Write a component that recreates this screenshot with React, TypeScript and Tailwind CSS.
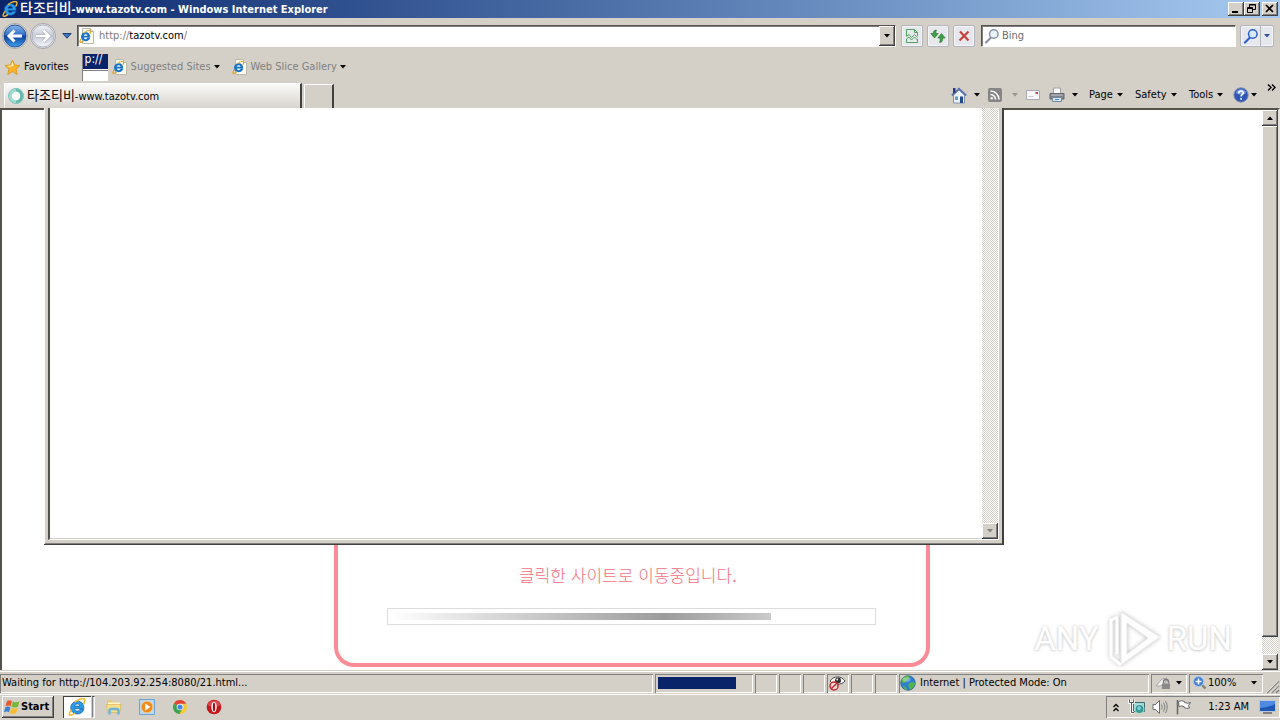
import React from "react";

const raised =
  "bg-[#d4d0c8] shadow-[inset_-1px_-1px_0_#404040,inset_1px_1px_0_#fff,inset_-2px_-2px_0_#808080]";
const sunken = "shadow-[inset_1px_1px_0_#808080,inset_-1px_-1px_0_#fff]";
const hatch =
  "bg-[repeating-conic-gradient(#fff_0_25%,#d4d0c8_0_50%)] bg-[length:2px_2px]";

function Arrow({ className = "fill-black" }: { className?: string }) {
  return (
    <svg width="6" height="4" viewBox="0 0 6 4" className={`shrink-0 ${className}`} aria-hidden="true">
      <path d="M0 0h6L3 3.5z" />
    </svg>
  );
}

function IeGlyph({ size = 16 }: { size?: number }) {
  return (
    <svg width={size} height={size} viewBox="0 0 16 16" className="shrink-0" aria-hidden="true">
      <path
        d="M14 10.200C13.200 12.800 11.200 14.200 8.400 14.200 5 14.200 2.400 11.900 2.400 8.700 2.400 5.400 5 2.800 8.400 2.800c3.700 0 6 2.700 5.700 6.700H6c.2 1.400 1.100 2.100 2.400 2.100.9 0 1.700-.4 2.100-1.400zM6 7.200h4.500C10.300 5.900 9.500 5.300 8.300 5.300 7.100 5.300 6.200 6 6 7.200z"
        fill="#2b9be6"
        stroke="#0c56a8"
        strokeWidth=".6"
      />
      <path
        d="M3 10.300C1.100 13 .6 15 1.800 15.300c1 .2 2.600-.6 4.200-1.900M5.800 3.700C9.200 1.200 13.400-.3 14.600 1c.8.9.3 2.600-1 4.600"
        fill="none"
        stroke="#f4b92e"
        strokeWidth="1.400"
      />
    </svg>
  );
}

function IePage() {
  return (
    <svg width="16" height="16" viewBox="0 0 16 16" className="shrink-0" aria-hidden="true">
      <path d="M3.500.5h8l3 3v12h-11z" fill="#fdfdf6" stroke="#bab8a6" />
      <path d="M11.500.5v3h3" fill="#e8e4d0" stroke="#bab8a6" />
      <path
        d="M11.200 9.800C10.600 11.900 8.900 13.200 6.700 13.200 4 13.200 2 11.300 2 8.800s2-4.500 4.700-4.500c2.800 0 4.700 2 4.500 5.200H4.800c.1 1 .9 1.700 1.900 1.700.8 0 1.400-.5 1.700-1.400zM4.800 7.800h3.700C8.300 6.800 7.600 6.300 6.700 6.300c-.9 0-1.700.5-1.900 1.500z"
        fill="#1b74cc"
      />
      <path d="M2.200 10.600C.9 12.600.5 14.200 1.400 14.400c.8.100 2-.5 3.300-1.500M5 4.800c2.500-1.900 5.500-3 6.400-2 .5.6.2 1.800-.6 3" fill="none" stroke="#dba52d" strokeWidth="1.200" />
    </svg>
  );
}

function NavCluster() {
  return (
    <div className="flex shrink-0 items-center rounded-full">
      <button aria-label="Back" className="size-7">
        <svg width="28" height="28" viewBox="0 0 28 28">
          <defs>
            <linearGradient id="bk" x1="0" y1="0" x2="0" y2="1">
              <stop offset="0" stopColor="#8db8ea" />
              <stop offset=".45" stopColor="#2f6fc6" />
              <stop offset=".5" stopColor="#0c3d98" />
              <stop offset="1" stopColor="#3fa4ee" />
            </linearGradient>
          </defs>
          <circle cx="14" cy="14" r="12.500" fill="#e7e9ee" stroke="#a3a2a8" />
          <circle cx="14" cy="14" r="11" fill="url(#bk)" stroke="#26508f" />
          <path d="M13.500 8.500 8 14l5.500 5.500M8.500 14H21" stroke="#fff" strokeWidth="3" fill="none" />
        </svg>
      </button>
      <button aria-label="Forward" className="size-7">
        <svg width="28" height="28" viewBox="0 0 28 28">
          <defs>
            <linearGradient id="fw" x1="0" y1="0" x2="0" y2="1">
              <stop offset="0" stopColor="#f2f3f6" />
              <stop offset=".5" stopColor="#c6cbd6" />
              <stop offset="1" stopColor="#f4f6fa" />
            </linearGradient>
          </defs>
          <circle cx="14" cy="14" r="12.500" fill="#e7e9ee" stroke="#a3a2a8" />
          <circle cx="14" cy="14" r="11" fill="url(#fw)" stroke="#b0b5c2" />
          <path d="m14.500 8.500 5.500 5.500-5.500 5.500M19.500 14H7" stroke="#a3a9b8" strokeWidth="4" fill="none" />
          <path d="m14.500 8.500 5.500 5.500-5.500 5.500M19.500 14H7" stroke="#fff" strokeWidth="2.600" fill="none" />
        </svg>
      </button>
    </div>
  );
}

function Magnifier({ stroke, lens }: { stroke: string; lens: string }) {
  return (
    <svg width="16" height="16" viewBox="0 0 16 16" className="shrink-0" aria-hidden="true">
      <path d="M7 9.500 2 14.500" stroke={stroke} strokeWidth="2.200" strokeLinecap="round" />
      <circle cx="9.800" cy="6" r="4.300" fill={lens} stroke={stroke} strokeWidth="1.500" />
    </svg>
  );
}

const toolBtn =
  "flex h-[22px] items-center justify-center rounded-xs border border-[#b3b5bb] bg-[#e6e8ee] shadow-[inset_0_0_0_1px_#f4f5f8]";

function TitleBar() {
  const ctl = `flex h-[14px] w-4 items-center justify-center ${raised}`;
  return (
    <header className="flex h-[18px] items-center bg-linear-to-r from-[#0a246a] to-[#a6caf0] pr-0.5 pl-0.5 text-white">
      <IeGlyph />
      <h1 className="ml-0.5 flex-1 text-[11px] font-bold whitespace-nowrap">
        <span className="text-[14px] font-medium">타조티비</span>-www.tazotv.com - Windows Internet Explorer
      </h1>
      <button aria-label="Minimize" className={ctl}>
        <svg width="16" height="14"><path d="M4 9h6v2H4z" /></svg>
      </button>
      <button aria-label="Restore" className={ctl}>
        <svg width="16" height="14" fill="none" stroke="#000">
          <path d="M5.500 5V2.500h6v5H9M5 3h7M3.500 5.500h5v5h-5zM3 6.500h6" />
        </svg>
      </button>
      <button aria-label="Close" className={`ml-0.5 ${ctl}`}>
        <svg width="16" height="14"><path d="m4 3 7 7M11 3l-7 7" stroke="#000" strokeWidth="1.700" /></svg>
      </button>
    </header>
  );
}

function NavBar() {
  return (
    <div className="flex h-[34px] items-center pt-px pr-1.5 pl-px">
      <NavCluster />
      <button aria-label="Recent pages" className="flex w-5 justify-center">
        <svg width="10" height="6"><path d="M.8.5h8.400L5 5.200z" fill="#3f78bd" stroke="#1c3f78" /></svg>
      </button>
      <div className="flex h-[22px] flex-1 items-center border border-t-[#55524c] border-r-white border-b-white border-l-[#55524c] bg-white pl-px shadow-[inset_1px_1px_0_#808080]">
        <IePage />
        <div className="relative ml-1 flex-1 text-[11px]">
          <input
            aria-label="Address"
            defaultValue="http://tazotv.com/"
            className="w-full bg-transparent text-transparent outline-none"
          />
          <span aria-hidden="true" className="pointer-events-none absolute inset-0 flex items-center text-[#7a7a7a]">
            http://<span className="text-black">tazotv.com</span>/
          </span>
        </div>
        <button aria-label="Show address list" className={`flex h-5 w-4 items-center justify-center ${raised}`}>
          <Arrow />
        </button>
      </div>
      <button aria-label="Compatibility view" className={`${toolBtn} ml-[5px] w-[22px]`}>
        <svg width="14" height="16" viewBox="0 0 14 16" fill="none" stroke="#4fa35c">
          <path d="M1.500 8V1.500h8l3 3V8M9.500 1.500v3h3M1.500 11v3.500h11V11" />
          <path d="m1.500 8.500 2.500-2 2.500 3 3-3 3 3M1.500 11l2.500-2 2.500 3 3-3 3 3" />
        </svg>
      </button>
      <button aria-label="Refresh" className={`${toolBtn} ml-1 w-[22px]`}>
        <svg width="16" height="14" viewBox="0 0 16 14">
          <path d="M6.500 1C4.200 1 3.200 2.500 3.200 4.500H.8L4.500 9l3.700-4.500H5.800C5.800 3 6 2 6.500 1z" fill="#41a046" stroke="#1f7428" strokeWidth=".6" />
          <path d="M9.500 13.500c2.300 0 3.300-1.500 3.300-4.500h2.400l-3.700-4.500L7.800 9h2.400c0 2-.2 3.500-.7 4.500z" fill="#41a046" stroke="#1f7428" strokeWidth=".6" />
        </svg>
      </button>
      <button aria-label="Stop" className={`${toolBtn} ml-1 w-[22px]`}>
        <svg width="12" height="12" viewBox="0 0 12 12">
          <path d="m2 1.500 8.500 9M10.500 1.500 1.500 10.500" stroke="#c8403c" strokeWidth="2.200" />
        </svg>
      </button>
      <div className="ml-1.5 flex h-[22px] w-[255px] items-center border border-t-[#55524c] border-r-white border-b-white border-l-[#55524c] bg-white pl-0.5 shadow-[inset_1px_1px_0_#808080]">
        <Magnifier stroke="#8a93a3" lens="#eaf3fb" />
        <input
          aria-label="Search"
          placeholder="Bing"
          className="ml-0.5 min-w-0 flex-1 bg-transparent text-[11px] outline-none placeholder:text-[#6d6d6d]"
        />
      </div>
      <div className={`${toolBtn} ml-1`}>
        <button aria-label="Go" className="flex h-5 w-5 items-center justify-center border-r border-[#b3b5bb]">
          <Magnifier stroke="#2c5fc9" lens="#d8e8fb" />
        </button>
        <button aria-label="Search options" className="flex h-5 w-3 items-center justify-center">
          <Arrow className="fill-[#2c56a4]" />
        </button>
      </div>
    </div>
  );
}

function FavoritesBar() {
  return (
    <div className="flex h-[30px] items-center pl-1 text-[11px]">
      <button className="flex items-center gap-[3px]">
        <svg width="17" height="17" viewBox="0 0 17 17" aria-hidden="true">
          <path d="m8.500 1 2.200 5 5.300.5-4 3.600 1.200 5.300-4.700-2.800-4.700 2.800L5 10.100 1 6.500 6.300 6z" fill="#fbb42a" stroke="#dd9a25" />
          <path d="m8.500 3 1.300 3.800-4 1.200L3 7l4-.5z" fill="#fff2b5" />
        </svg>
        Favorites
      </button>
      <div className="ml-[13px] flex h-[27px] w-[26px] flex-col overflow-hidden border-l border-[#808080] bg-white">
        <span className="h-[15px] bg-[#0a246a] pl-0.5 text-[12px] leading-[11px] text-white">p://</span>
        <span className="mt-px h-px bg-[#808080]" />
      </div>
      <button className="ml-1 flex items-center gap-[3px] text-[#808080]">
        <IePage />
        Suggested Sites
        <Arrow className="fill-black" />
      </button>
      <button className="ml-3 flex items-center gap-[3px] text-[#808080]">
        <IePage />
        Web Slice Gallery
        <Arrow className="fill-black" />
      </button>
    </div>
  );
}

function CommandBar() {
  return (
    <div className="flex items-center self-center text-[11px]">
      <button aria-label="Home" className="flex w-[37px] items-center gap-[7px]">
        <svg width="16" height="17" viewBox="0 0 16 17">
          <path d="M2.500 8v8h11V8L8 3z" fill="#edf1f8" stroke="#8391ad" />
          <path d="M.8 8.500 8 1.800l7.200 6.700" fill="none" stroke="#5a76b0" strokeWidth="1.800" />
          <path d="M2 1h2.500v4L2 7z" fill="#273c86" />
          <path d="M4 9.500h3V13H4z" fill="#5d9fd0" />
          <path d="M9 9.500h3V16H9z" fill="#244b8c" />
        </svg>
        <Arrow />
      </button>
      <button aria-label="Feeds" className="flex w-[38px] items-center gap-2.5">
        <svg width="14" height="14" viewBox="0 0 14 14">
          <rect width="14" height="14" rx="2" fill="#858585" />
          <path d="M2.500 6.500a5 5 0 0 1 5 5M2.500 3a8.500 8.500 0 0 1 8.500 8.500" stroke="#fff" strokeWidth="1.600" fill="none" />
          <circle cx="3.700" cy="10.300" r="1.300" fill="#fff" />
        </svg>
        <Arrow className="fill-[#9a968e]" />
      </button>
      <button aria-label="Read mail" className="w-[23px]">
        <svg width="14" height="10" viewBox="0 0 14 10">
          <path d="M.5.500h13v9H.5z" fill="#f8f8fa" stroke="#a9a9b3" />
          <path d="M9.500 2h2.500v2H9.500z" fill="#c3454a" />
          <path d="M2.500 6.500h5" stroke="#c9cad2" />
        </svg>
      </button>
      <button aria-label="Print" className="flex w-10 items-center gap-[7px]">
        <svg width="16" height="16" viewBox="0 0 16 16">
          <path d="M4.500 1h7v6h-7z" fill="#fff" stroke="#a0a0a0" />
          <path d="M1 6.500h14V12H1z" fill="#80848c" stroke="#62656c" />
          <path d="M2 8h12" stroke="#c5c8ce" />
          <path d="M3.500 10.500h9v4h-9z" fill="#d8e9f5" stroke="#6f8799" />
          <path d="M6 12.500h4" stroke="#3d8cc4" />
        </svg>
        <Arrow />
      </button>
      <button className="flex w-[46px] items-center gap-1">Page<Arrow /></button>
      <button className="flex w-[54px] items-center gap-1">Safety<Arrow /></button>
      <button className="flex w-11 items-center gap-1">Tools<Arrow /></button>
      <button aria-label="Help" className="flex w-[34px] items-center gap-0.5">
        <svg width="16" height="16" viewBox="0 0 16 16">
          <circle cx="8" cy="8" r="7.200" fill="#2f56b4" stroke="#8390ad" />
          <path d="M3 6a5.200 5.200 0 0 1 10 0C10 8 6 8 3 6z" fill="#7b9be0" />
          <path d="M5.800 6.200c0-3 4.600-2.800 4.500-.2C10.200 7.500 8.100 7.500 8.100 9.500M8.100 11v1.700" stroke="#fff" strokeWidth="1.600" fill="none" />
        </svg>
        <Arrow />
      </button>
      <button aria-label="More commands" className="mb-4 w-[13px]">
        <svg width="9" height="7" fill="none" stroke="#000" strokeWidth="1.400"><path d="m1 .5 3 3-3 3M5 .5l3 3-3 3" /></svg>
      </button>
    </div>
  );
}

function TabRow() {
  return (
    <div className="flex h-[26px] items-end pl-1">
      <div role="tab" className="flex h-[25px] w-[298px] items-center gap-[3px] border-t border-r-2 border-l border-t-white border-r-[#404040] border-l-white bg-linear-to-b from-[#fafaf9] to-[#d8d4cd] pl-[3px] text-[11px] whitespace-nowrap">
        <svg width="16" height="16" viewBox="0 0 16 16" aria-hidden="true">
          <circle cx="8" cy="8" r="6" fill="none" stroke="#9adcd2" strokeWidth="3.500" />
          <path d="M8 2a6 6 0 0 1 6 6 6 6 0 0 1-6 6" fill="none" stroke="#62bcae" strokeWidth="3" />
          <circle cx="8" cy="8" r="7.500" fill="none" stroke="#8fbfb8" />
          <circle cx="8" cy="8" r="4.200" fill="#fff" />
        </svg>
        <span><span className="text-[13px]">타조티비</span>-www.tazotv.com</span>
      </div>
      <button aria-label="New tab" className="ml-0.5 h-6 w-[30px] border-t border-r-2 border-l border-t-white border-r-[#404040] border-l-white" />
      <div className="flex flex-1 justify-end self-stretch">
        <CommandBar />
      </div>
    </div>
  );
}

function Watermark() {
  return (
    <div className="absolute right-[46px] bottom-0 flex items-center font-['Liberation_Sans_Narrow','Roboto',sans-serif] text-[33px] leading-[60px] text-white [text-shadow:0_0_3px_#cfcfcf,0_1px_3px_#d4d4d4]">
      <span>ANY</span>
      <svg width="60" height="62" viewBox="0 0 60 62" className="mr-1 ml-1 drop-shadow-[0_0_2px_#c0c0c0]" aria-hidden="true">
        <path d="M18 4 57 29 18 57zM24 15v31l21-16z" fill="#fefefe" fillRule="evenodd" stroke="#e8e8e8" />
        <path d="M15 9 8 12v37l10 8M14 11v35" fill="none" stroke="#fff" strokeWidth="3" />
      </svg>
      <span>RUN</span>
    </div>
  );
}

function PageScrollbar() {
  return (
    <div className={`flex w-4 shrink-0 flex-col ${hatch}`}>
      <button aria-label="Scroll up" className={`flex h-4 items-center justify-center ${raised}`}>
        <Arrow className="rotate-180 fill-black" />
      </button>
      <div className={`flex-1 ${raised}`} />
      <div className="h-[17px]" />
      <button aria-label="Scroll down" className={`flex h-4 items-center justify-center ${raised}`}>
        <Arrow />
      </button>
    </div>
  );
}

function PopupGhost() {
  return (
    <div className="absolute -top-0.5 right-[274px] left-[42px] flex h-[437px] border-r-2 border-b border-[#404040] bg-[#d4d0c8] pr-[3px] pb-1 pl-1 shadow-[inset_1px_0_0_#fff,inset_0_-1px_0_#808080]">
      <div className="flex flex-1 border-r border-b border-l-2 border-r-white border-b-white border-l-[#55524c] bg-white">
        <div className="flex-1 border-b border-[#d4d0c8]" />
        <div className={`flex w-4 flex-col justify-end ${hatch}`}>
          <button aria-label="Scroll popup down" className={`flex h-4 items-center justify-center ${raised}`}>
            <Arrow className="fill-[#808080]" />
          </button>
        </div>
      </div>
    </div>
  );
}

function PageArea() {
  return (
    <main className="relative flex flex-1 border-t-2 border-r-2 border-l-2 border-t-[#55524c] border-r-[#e6e3dd] border-l-[#55524c] bg-white">
      <div className="flex flex-1 items-end justify-center">
        <section className="mb-[3px] flex h-[250px] w-[596px] flex-col items-center justify-end rounded-b-[20px] border-x-4 border-b-4 border-[#fb8c96] pb-[38px]">
          <p className="mr-2 text-[17px] leading-5 font-light text-[#f4707e]">클릭한 사이트로 이동중입니다.</p>
          <div className="mt-[22px] mr-0.5 h-[17px] w-[489px] border border-[#dcdcdc] p-1 pl-[3px]">
            <div className="h-[7px] w-[380px] bg-linear-to-r from-white via-[#9c9c9c] via-72% to-[#cacaca]" />
          </div>
        </section>
      </div>
      <PageScrollbar />
      <PopupGhost />
      <Watermark />
    </main>
  );
}

function StatusBar() {
  return (
    <footer className="flex h-[24px] items-center gap-0.5 border-t border-[#d4d0c8] pt-px text-[11px] whitespace-nowrap shadow-[inset_0_1px_0_#fff]">
      <div className={`flex h-[19px] flex-1 items-center pl-0.5 ${sunken}`}>
        Waiting for http://104.203.92.254:8080/21.html...
      </div>
      <div className={`h-[19px] w-[98px] p-[3px] ${sunken}`}>
        <div className="h-3 w-[78px] bg-[#0a246a]" />
      </div>
      <div className={`h-[19px] w-[22px] ${sunken}`} />
      <div className={`h-[19px] w-[22px] ${sunken}`} />
      <div className={`h-[19px] w-[22px] ${sunken}`} />
      <div className={`flex h-[19px] w-[22px] items-center pl-px ${sunken}`}>
        <svg width="18" height="16" viewBox="0 0 18 16" aria-hidden="true">
          <path d="M2 6C6 .5 13 .5 17 6c-4 4.500-11 4.500-15 0z" fill="#fff" stroke="#444" />
          <circle cx="10" cy="5.500" r="3" fill="#333" />
          <circle cx="9.200" cy="4.500" r=".9" fill="#fff" />
          <circle cx="6" cy="11" r="4" fill="#f5dede" stroke="#c5282c" strokeWidth="1.500" />
          <path d="m8.800 8.200-5.600 5.600" stroke="#c5282c" strokeWidth="1.500" />
        </svg>
      </div>
      <div className={`h-[19px] w-[22px] ${sunken}`} />
      <div className={`h-[19px] w-[22px] ${sunken}`} />
      <div className={`flex h-[19px] w-[250px] items-center gap-1 pl-px ${sunken}`}>
        <svg width="16" height="16" viewBox="0 0 16 16" aria-hidden="true">
          <circle cx="8" cy="8" r="7.300" fill="#2f7fd4" stroke="#1d4c8c" strokeWidth=".6" />
          <path d="M2 4c2-3 5-3.500 7-3 1 2-1 3-2 4S6 8 4 8 1 7 2 4zM9 8c2-1 5-1 6 0-.5 4-3 6-5 6.500C8.500 13 8 9.500 9 8zM3 11l3 1 1 3c-2 0-4-2-4-4z" fill="#52b548" />
          <ellipse cx="6.500" cy="4.500" rx="4" ry="2.300" fill="#fff" opacity=".35" />
        </svg>
        Internet | Protected Mode: On
      </div>
      <button aria-label="Security report" className={`flex h-[19px] w-9 items-center gap-1 pl-1 ${sunken}`}>
        <svg width="17" height="16" viewBox="0 0 17 16">
          <path d="m1 11 6-7 5-1-2 5-5 3z" fill="#f2f2f2" stroke="#a5a5a5" />
          <path d="M8.500 8.500V7a2.500 2.500 0 0 1 5 0v1.500" fill="none" stroke="#777" strokeWidth="1.300" />
          <path d="M7 8.500h8V14H7z" fill="#8a8a8a" />
        </svg>
        <Arrow />
      </button>
      <button className={`flex h-[19px] w-[74px] items-center pl-[3px] ${sunken}`}>
        <svg width="16" height="16" viewBox="0 0 16 16" aria-hidden="true">
          <path d="m9 9 4.500 4.500" stroke="#8a8272" strokeWidth="2.400" />
          <circle cx="6.500" cy="6.500" r="5" fill="#3f7fdc" stroke="#b4c8e8" />
          <path d="M6.500 3.500v6M3.500 6.500h6" stroke="#fff" strokeWidth="1.600" />
        </svg>
        <span className="flex-1 text-left">100%</span>
        <Arrow className="mr-1.5 fill-black" />
      </button>
      <svg width="15" height="16" viewBox="0 0 15 16" className="self-end" aria-hidden="true">
        <path d="M2 15 14 3M6.500 15 14 7.500M11 15l3-3" stroke="#808080" strokeWidth="1.500" />
        <path d="M1 15 13.500 2.500M5.500 15l8-8" stroke="#fff" strokeWidth=".7" />
      </svg>
    </footer>
  );
}

function Taskbar() {
  return (
    <nav className="flex h-[26px] items-center pl-0.5 text-[11px] shadow-[inset_0_1px_0_#fff]">
      <button className={`flex h-[22px] w-[52px] items-center gap-px pl-0.5 font-bold ${raised}`}>
        <svg width="16" height="16" viewBox="0 0 16 16" aria-hidden="true">
          <path d="M3 2C5 .8 6.600 1 8 2L6.600 7.300C5 6.300 3.300 6.300 1.500 7.300z" fill="#e8582c" />
          <path d="M8.900 2.500c1.700 1 4 1 6.600-.3L14 7.700c-2.300 1.200-4.700 1.100-6.500.1z" fill="#7ab83c" />
          <path d="M1.300 8.200C3 7.200 4.800 7.200 6.400 8.200L5 13.300C3.300 12.300 1.800 12.300 0 13.300z" fill="#3a83d0" />
          <path d="M7.200 8.800c1.800 1 4.200 1 6.500-.1l-1.500 5.400c-2.200 1.100-4.400.9-6.300-.2z" fill="#f5bd2d" />
        </svg>
        Start
      </button>
      <button aria-label="Internet Explorer" className="ml-[9px] flex h-[22px] w-7 items-center justify-center bg-white shadow-[inset_1px_1px_0_#404040]">
        <IeGlyph size={18} />
      </button>
      <span className="ml-px h-[22px] w-[3px] border border-t-[#404040] border-r-white border-b-white border-l-[#808080]" />
      <button aria-label="Windows Explorer" className="ml-[10px] w-[34px]">
        <svg width="18" height="18" viewBox="0 0 18 18">
          <path d="M2 2.500h5L8 4h7v10H2z" fill="#e9c765" />
          <path d="M3 4.500h12v3H3z" fill="#fdf6cf" />
          <path d="M1.500 6.500h14.500l-1 8H2.500z" fill="#f6dd86" stroke="#d3ae4e" strokeWidth=".6" />
          <path d="M4.500 16.500V13q0-2 2-2h5q2 0 2 2v3.500" fill="none" stroke="#6bb3dc" strokeWidth="2.400" />
        </svg>
      </button>
      <button aria-label="Media Player" className="w-[33px]">
        <svg width="16" height="16" viewBox="0 0 16 16">
          <path d="M.5.500h15v15H.5z" fill="#b9d9f3" stroke="#6ba4d4" />
          <circle cx="8" cy="8" r="5.800" fill="#ef8a1d" stroke="#fbc377" />
          <path d="M6.200 4.500 11.500 8l-5.300 3.500z" fill="#fff" />
        </svg>
      </button>
      <button aria-label="Chrome" className="w-[34px]">
        <svg width="16" height="16" viewBox="0 0 16 16">
          <circle cx="8" cy="8" r="7" fill="#f7cb2e" />
          <path d="M8 8 1.900 4.500A7 7 0 0 1 14.100 4.700H8z" fill="#dd4337" />
          <path d="M8 8 1.900 4.500A7 7 0 0 0 7.500 15l3-5.500z" fill="#3ea253" />
          <circle cx="8" cy="8" r="3.300" fill="#fff" />
          <circle cx="8" cy="8" r="2.600" fill="#4a86e0" />
        </svg>
      </button>
      <button aria-label="Opera">
        <svg width="16" height="16" viewBox="0 0 16 16">
          <circle cx="8" cy="8" r="7.300" fill="#c4161c" />
          <path d="M1.500 6a7 7 0 0 1 13 0C11 8 5 8 1.500 6z" fill="#e0605f" opacity=".7" />
          <ellipse cx="8" cy="8" rx="2.700" ry="5.300" fill="#fff" />
          <ellipse cx="8" cy="8" rx="1.200" ry="4.500" fill="#a80f14" />
        </svg>
      </button>
      <div className={`ml-auto flex h-[22px] w-[174px] items-center pl-[7px] ${sunken}`}>
        <button aria-label="Show hidden icons" className="w-[15px]">
          <svg width="6" height="9" fill="none" stroke="#000" strokeWidth="1.300"><path d="m.5 4 2.500-2.500L5.500 4M.5 8 3 5.500 5.500 8" /></svg>
        </button>
        <svg width="18" height="16" viewBox="0 0 18 16" className="mr-1.5" aria-hidden="true">
          <path d="M5.500 3.500h11v9h-11z" fill="#9fd8d4" stroke="#3c6c70" />
          <circle cx="11.500" cy="10" r="4.500" fill="#2e9b8c" stroke="#eaf6f4" strokeWidth=".7" />
          <path d="M9 9c1-2 3-2 4-1s-1 3-2 4z" fill="#7fc9ec" />
          <path d="M1.500.5v3h4v-3M3.500 4v9.500H6" fill="none" stroke="#fff" strokeWidth="2.600" />
          <path d="M1.500.5v3h4v-3M3.500 4v9.500H6" fill="none" stroke="#555" />
        </svg>
        <svg width="16" height="16" viewBox="0 0 16 16" className="mr-2" fill="none" aria-hidden="true">
          <path d="M1 5.500h2.500L7.500 1.500v13L3.500 10.500H1z" fill="#fff" stroke="#6a6a6a" />
          <path d="M9.500 5.500q1.500 2.500 0 5M11.500 3.500q3 4.500 0 9M13.500 2q3.500 6 0 12" stroke="#808080" />
        </svg>
        <svg width="16" height="16" viewBox="0 0 16 16" aria-hidden="true">
          <path d="M2.500 2.500q3-1.500 6 0v1q3 1.500 6 0l-2 3 1 2.500q-3 1-5.500-.5v-1q-2-1-5 0z" fill="#fff" stroke="#666" />
          <path d="M1.500 1v14.500" stroke="#666" strokeWidth="1.500" />
        </svg>
        <time className="ml-auto whitespace-nowrap">1:23 AM</time>
        <button aria-label="Show desktop" className="mr-1 ml-2.5">
          <svg width="17" height="14" viewBox="0 0 17 14">
            <path d="M.5.500h16v11H.5z" fill="#1e56b4" stroke="#b8c6dc" />
            <path d="M1 1h15v3Q8 8 1 8z" fill="#4f8ae0" />
            <path d="M4 13h9" stroke="#666" strokeWidth="1.500" />
          </svg>
        </button>
      </div>
    </nav>
  );
}

export default function App() {
  return (
    <div className="flex min-h-screen flex-col overflow-hidden bg-[#d4d0c8] font-['Tahoma','DejaVu_Sans_Condensed','Noto_Sans_CJK_KR',sans-serif] leading-4 text-black">
      <TitleBar />
      <NavBar />
      <FavoritesBar />
      <TabRow />
      <PageArea />
      <StatusBar />
      <Taskbar />
    </div>
  );
}
